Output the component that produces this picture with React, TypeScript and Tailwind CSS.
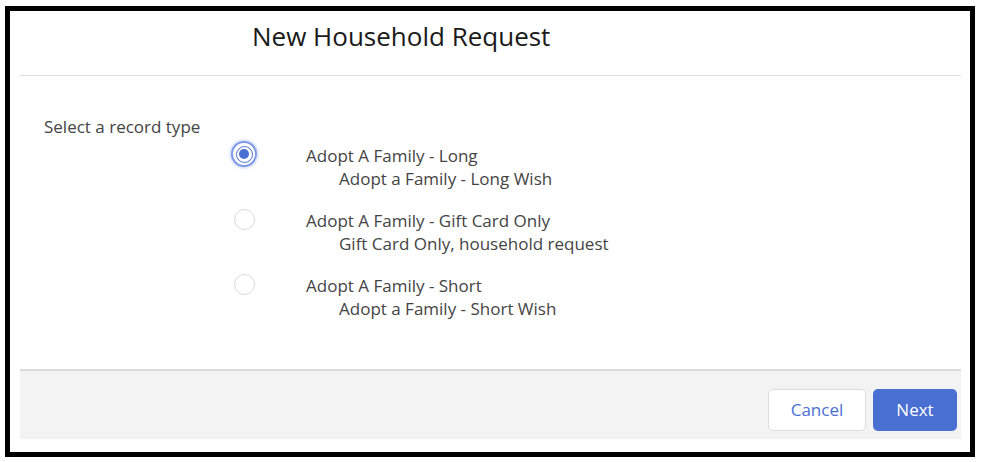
import React from "react";

const options = [
  { title: "Adopt A Family - Long", sub: "Adopt a Family - Long Wish", checked: true },
  { title: "Adopt A Family - Gift Card Only", sub: "Gift Card Only, household request", checked: false },
  { title: "Adopt A Family - Short", sub: "Adopt a Family - Short Wish", checked: false },
];

export default function App() {
  return (
    <div className="w-[981px] h-[462px] bg-white pt-[6px] pl-[5px]" style={{ fontFamily: '"Open Sans", "Noto Sans", sans-serif' }}>
      <div className="w-[970px] h-[451px] border-[5px] border-black bg-white pl-[10px] pr-[9px] flex flex-col">
        <div className="h-[65px] shrink-0 pt-[9px] pl-[232px] border-b border-[#dddddd]">
          <h1 className="text-[26px] leading-[32px] text-[#1a1a1a] font-normal">New Household Request</h1>
        </div>
        <div className="h-[293px] shrink-0 pt-[40px]">
          <div className="pl-[24px] text-[17px] leading-[22px] text-[#444444]">Select a record type</div>
          <div className="mt-[6px] flex flex-col gap-[19px]">
            {options.map((o) => (
              <div key={o.title} className="flex items-start">
                <div className="ml-[213px] w-[22px] h-[22px] mt-[-1px] flex items-center justify-center">
                  {o.checked ? (
                    <div className="w-[22px] h-[22px] rounded-full border-2 border-white bg-white shadow-[0_0_0_2px_#7f9ae6,0_0_3px_3px_#c5d3f5] flex items-center justify-center">
                      <div className="w-[17px] h-[17px] rounded-full border border-[#4a6fd3] flex items-center justify-center">
                        <div className="w-[10px] h-[10px] rounded-full bg-[#4a6fd3]" />
                      </div>
                    </div>
                  ) : (
                    <div className="w-[21px] h-[21px] rounded-full border border-[#d8d8d8] bg-white" />
                  )}
                </div>
                <div className="ml-[51px] text-[17px] leading-[23px] text-[#444444]">
                  <div>{o.title}</div>
                  <div className="pl-[33px]">{o.sub}</div>
                </div>
              </div>
            ))}
          </div>
        </div>
        <div className="h-[70px] shrink-0 border-t-2 border-[#dcdcdc] bg-[#f3f3f3] flex items-start justify-end pt-[18px] pr-[4px] gap-[7px]">
          <button className="w-[98px] h-[42px] rounded-[5px] border border-[#dddddd] bg-white text-[17px] text-[#4a6fd3]">Cancel</button>
          <button className="w-[84px] h-[42px] rounded-[5px] bg-[#4a6fd3] text-[17px] text-white">Next</button>
        </div>
      </div>
    </div>
  );
}
